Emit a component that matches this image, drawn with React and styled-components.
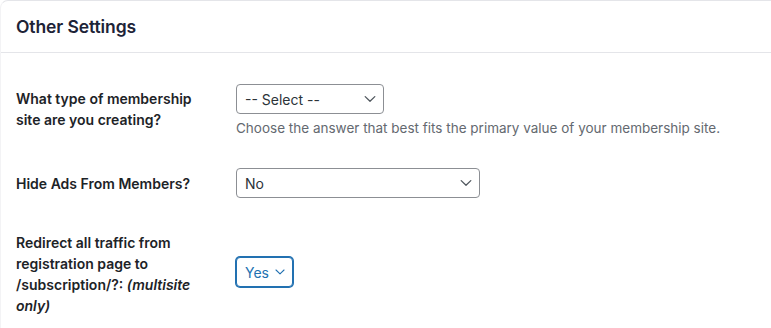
import React from 'react';
import styled, { createGlobalStyle } from 'styled-components';

const GlobalStyle = createGlobalStyle`
  html, body {
    margin: 0;
    padding: 0;
    background: #fff;
  }
  body {
    font-family: Inter, "Noto Sans", "Liberation Sans", sans-serif;
    color: #1d2327;
    -webkit-font-smoothing: antialiased;
  }
`;

const Card = styled.div`
  width: 800px;
  min-height: 340px;
  border: 1px solid #e4e5e9;
  border-right: none;
  border-bottom: none;
  border-top-left-radius: 8px;
  border-left-color: #f3f3f5;
  box-sizing: border-box;
  background: #fff;
`;

const CardHeader = styled.div`
  height: 51px;
  padding: 0 15px;
  display: flex;
  align-items: center;
  border-bottom: 1px solid #e4e5e9;
`;

const Title = styled.h2`
  margin: 0;
  font-size: 17.5px;
  font-weight: 600;
  color: #1d2337;
  letter-spacing: -0.1px;
`;

const Body = styled.div`
  padding: 16px 15px 0;
`;

const Row = styled.div`
  display: grid;
  grid-template-columns: 220px 1fr;
  align-items: center;
  padding: ${(p) => p.$top || 15}px 0 15px;
`;

const Label = styled.div`
  width: 200px;
  font-size: 14px;
  font-weight: 600;
  line-height: 21px;
  color: #1d2327;
  transform: translateY(${(p) => p.$shift || 0}px);

  em {
    font-style: italic;
  }
`;

const Field = styled.div`
  display: flex;
  flex-direction: column;
  align-items: flex-start;
`;

const Select = styled.div`
  box-sizing: border-box;
  width: ${(p) => p.$width}px;
  height: 30px;
  padding: 0 7px 0 8px;
  display: flex;
  align-items: center;
  justify-content: space-between;
  gap: 6px;
  font-size: 14px;
  color: ${(p) => (p.$focused ? '#2271b1' : '#2c3338')};
  border: 1px solid ${(p) => (p.$focused ? '#2271b1' : '#8c8f94')};
  box-shadow: ${(p) => (p.$focused ? '0 0 0 1px #2271b1' : 'none')};
  border-radius: 4px;
  background: #fff;
`;

const Description = styled.p`
  margin: 4px 0 0;
  font-size: 13.5px;
  line-height: 20px;
  color: #646970;
`;

function Chevron({ color }) {
  return (
    <svg width="12" height="8" viewBox="0 0 12 8" fill="none">
      <path d="M1.2 1.6L6 6.2l4.8-4.6" stroke={color} strokeWidth="1.3" strokeLinecap="round" strokeLinejoin="round" />
    </svg>
  );
}

export default function App() {
  return (
    <>
      <GlobalStyle />
      <Card>
        <CardHeader>
          <Title>Other Settings</Title>
        </CardHeader>
        <Body>
          <Row>
            <Label $shift={-2}>What type of membership site are you creating?</Label>
            <Field>
              <Select $width={148}>
                <span>-- Select --</span>
                <Chevron color="#50575e" />
              </Select>
              <Description>
                Choose the answer that best fits the primary value of your membership site.
              </Description>
            </Field>
          </Row>
          <Row>
            <Label>Hide Ads From Members?</Label>
            <Field>
              <Select $width={244}>
                <span>No</span>
                <Chevron color="#50575e" />
              </Select>
            </Field>
          </Row>
          <Row $top={17}>
            <Label $shift={1.5}>
              Redirect all traffic from registration page to /subscription/?: <em>(multisite only)</em>
            </Label>
            <Field>
              <Select $width={57} $focused>
                <span>Yes</span>
                <Chevron color="#2271b1" />
              </Select>
            </Field>
          </Row>
        </Body>
      </Card>
    </>
  );
}
